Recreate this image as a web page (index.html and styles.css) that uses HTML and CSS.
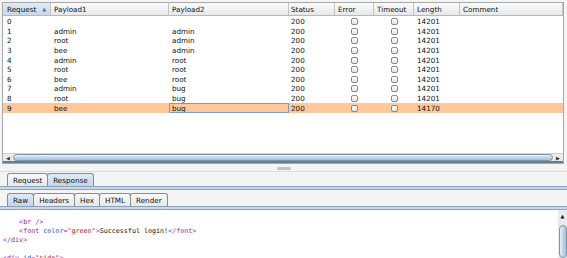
FILE: index.html
```html
<!DOCTYPE html>
<html>
<head>
<meta charset="utf-8">
<link rel="stylesheet" href="styles.css">
</head>
<body>
<div class="app">
  <div class="table-wrap">
    <div class="row head">
      <div class="c c0 sorted">Request <span class="arrow">▲</span></div>
      <div class="c c1">Payload1</div>
      <div class="c c2">Payload2</div>
      <div class="c c3">Status</div>
      <div class="c c4">Error</div>
      <div class="c c5">Timeout</div>
      <div class="c c6">Length</div>
      <div class="c c7">Comment</div>
    </div>
    <div class="body">
      <div class="row"><div class="c c0">0</div><div class="c c1"></div><div class="c c2"></div><div class="c c3">200</div><div class="c c4"><span class="cb"></span></div><div class="c c5"><span class="cb"></span></div><div class="c c6">14201</div><div class="c c7"></div></div>
      <div class="row"><div class="c c0">1</div><div class="c c1">admin</div><div class="c c2">admin</div><div class="c c3">200</div><div class="c c4"><span class="cb"></span></div><div class="c c5"><span class="cb"></span></div><div class="c c6">14201</div><div class="c c7"></div></div>
      <div class="row"><div class="c c0">2</div><div class="c c1">root</div><div class="c c2">admin</div><div class="c c3">200</div><div class="c c4"><span class="cb"></span></div><div class="c c5"><span class="cb"></span></div><div class="c c6">14201</div><div class="c c7"></div></div>
      <div class="row"><div class="c c0">3</div><div class="c c1">bee</div><div class="c c2">admin</div><div class="c c3">200</div><div class="c c4"><span class="cb"></span></div><div class="c c5"><span class="cb"></span></div><div class="c c6">14201</div><div class="c c7"></div></div>
      <div class="row"><div class="c c0">4</div><div class="c c1">admin</div><div class="c c2">root</div><div class="c c3">200</div><div class="c c4"><span class="cb"></span></div><div class="c c5"><span class="cb"></span></div><div class="c c6">14201</div><div class="c c7"></div></div>
      <div class="row"><div class="c c0">5</div><div class="c c1">root</div><div class="c c2">root</div><div class="c c3">200</div><div class="c c4"><span class="cb"></span></div><div class="c c5"><span class="cb"></span></div><div class="c c6">14201</div><div class="c c7"></div></div>
      <div class="row"><div class="c c0">6</div><div class="c c1">bee</div><div class="c c2">root</div><div class="c c3">200</div><div class="c c4"><span class="cb"></span></div><div class="c c5"><span class="cb"></span></div><div class="c c6">14201</div><div class="c c7"></div></div>
      <div class="row"><div class="c c0">7</div><div class="c c1">admin</div><div class="c c2">bug</div><div class="c c3">200</div><div class="c c4"><span class="cb"></span></div><div class="c c5"><span class="cb"></span></div><div class="c c6">14201</div><div class="c c7"></div></div>
      <div class="row"><div class="c c0">8</div><div class="c c1">root</div><div class="c c2">bug</div><div class="c c3">200</div><div class="c c4"><span class="cb"></span></div><div class="c c5"><span class="cb"></span></div><div class="c c6">14201</div><div class="c c7"></div></div>
      <div class="row sel"><div class="c c0">9</div><div class="c c1">bee</div><div class="c c2 focus">bug</div><div class="c c3">200</div><div class="c c4"><span class="cb"></span></div><div class="c c5"><span class="cb"></span></div><div class="c c6">14170</div><div class="c c7"></div></div>
    </div>
    <div class="hscroll">
      <span class="sarrow">◀</span>
      <div class="thumb"></div>
      <span class="sarrow">▶</span>
    </div>
  </div>
  <div class="divider"><span class="grip"></span></div>
  <div class="tabs">
    <span class="tab">Request</span><span class="tab active">Response</span>
  </div>
  <div class="bline"></div>
  <div class="tabs inner">
    <span class="tab active">Raw</span><span class="tab">Headers</span><span class="tab">Hex</span><span class="tab">HTML</span><span class="tab">Render</span>
  </div>
  <div class="bline"></div>
  <div class="editor">
    <div class="code">
      <div class="ln">    <span class="t">&lt;br /&gt;</span></div>
      <div class="ln">    <span class="t">&lt;font </span><span class="a">color</span><span class="t">=</span><span class="v">"green"</span><span class="t">&gt;</span>Successful login!<span class="t">&lt;/font&gt;</span></div>
      <div class="ln"><span class="t">&lt;/div&gt;</span></div>
      <div class="ln"> </div>
      <div class="ln"><span class="t">&lt;div </span><span class="a">id</span><span class="t">=</span><span class="v">"side"</span><span class="t">&gt;</span></div>
    </div>
    <div class="vscroll">
      <span class="varrow">▲</span>
      <div class="vthumb"></div>
    </div>
  </div>
</div>
</body>
</html>
```
FILE: styles.css
```css
* { box-sizing: border-box; }
html, body { margin: 0; padding: 0; }
body {
  width: 567px; height: 258px; overflow: hidden;
  background: #f4f4f4;
  font-family: "DejaVu Sans", sans-serif;
  font-size: 7.2px;
  color: #111;
}
.app { display: flex; flex-direction: column; height: 258px; }
.table-wrap {
  margin: 2px 3px 0 2px;
  height: 162px;
  flex-shrink: 0;
  border: 1px solid #a8a8a8;
  background: #fff;
  display: flex; flex-direction: column;
}
.row { display: flex; height: 9.6px; align-items: center; }
.row.head {
  height: 13px;
  flex-shrink: 0;
  background: linear-gradient(#fbfbfb, #e6e8ea);
  border-bottom: 1px solid #b8b8b8;
}
.head .c { border-right: 1px solid #c4c4c4; height: 100%; display: flex; align-items: center; }
.head .c.sorted { background: linear-gradient(#e2ebf4, #c8d7e6); justify-content: space-between; padding-right: 4px; }
.arrow { font-size: 5px; color: #4a6f9c; }
.body { flex: 1; padding-top: 1px; }
.c { padding-left: 3px; white-space: nowrap; overflow: hidden; height: 100%; display: flex; align-items: center; }
.c0 { width: 48px; padding-left: 4px; }
.c1 { width: 118px; }
.c2 { width: 120px; }
.c3 { width: 46px; padding-left: 2px; }
.c4 { width: 39px; justify-content: center; padding-left: 0; }
.c5 { width: 40px; justify-content: center; padding-left: 0; }
.c6 { width: 46px; }
.c7 { flex: 1; }
.head .c4, .head .c5 { justify-content: flex-start; padding-left: 3px; }
.cb {
  width: 7px; height: 7px;
  border: 1px solid #8a8a8a; border-radius: 2px;
  background: linear-gradient(#fff, #e4e4e4);
}
.row.sel { background: #ffc89a; }
.c.focus { border: 1px solid #7a9cc8; padding-left: 2px; }
.hscroll {
  height: 10px; flex-shrink: 0; display: flex; align-items: center;
  background: #e8eaec;
  border-top: 1px solid #d0d0d0;
  border-bottom: 2px solid #6a7c8c;
}
.sarrow { font-size: 5px; width: 10px; text-align: center; color: #333; }
.thumb {
  flex: 1; height: 7px;
  border: 1px solid #7d95ad; border-radius: 5px;
  background: linear-gradient(#e8f0f8, #bcd0e4 60%, #a9c0d8);
}
.divider {
  height: 8px; flex-shrink: 0; display: flex; justify-content: center; align-items: center;
  border-bottom: 1px solid #dcdcdc;
}
.grip { width: 14px; height: 3px; background: #c0c4c8; border-radius: 1px; margin-top: 2px; }
.tabs { display: flex; flex-shrink: 0; padding-left: 7px; height: 14px; align-items: flex-end; }
.tabs.inner { margin-top: 2px; }
.tab {
  height: 13px; padding: 0 5px; display: flex; align-items: center;
  border: 1px solid #8c8c8c; border-bottom: none;
  border-radius: 3px 3px 0 0;
  background: linear-gradient(#fafafa, #e6e6e6);
  margin-right: -1px;
}
.tab.active { background: linear-gradient(#dfe9f3, #c5d6e7); }
.bline {
  height: 4px; flex-shrink: 0;
  border-top: 1px solid #8aa2ba; border-bottom: 1px solid #8aa2ba;
  background: #c8d8e8;
}
.editor { flex: 1; min-height: 0; display: flex; background: #fff; overflow: hidden; }
.code {
  flex: 1; padding: 8px 0 0 3px;
  font-family: "DejaVu Sans Mono", monospace; font-size: 6.7px;
  color: #111;
}
.ln { height: 9px; line-height: 9px; white-space: pre; }
.t { color: #a020a0; }
.a { color: #3050d0; }
.v { color: #c02020; }
.vscroll { width: 9px; background: #e8eaec; display: flex; flex-direction: column; align-items: center; }
.varrow { font-size: 5px; margin-top: 3px; }
.vthumb {
  width: 8px; flex: 1; margin-top: 6px;
  border: 1px solid #7d95ad; border-radius: 5px;
  background: linear-gradient(90deg, #e8f0f8, #bcd0e4 60%, #a9c0d8);
}
```
